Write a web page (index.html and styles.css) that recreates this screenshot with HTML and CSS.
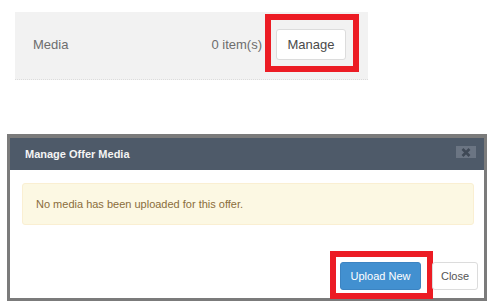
FILE: index.html
```html
<!DOCTYPE html>
<html>
<head>
<meta charset="utf-8">
<link rel="stylesheet" href="styles.css">
</head>
<body>
  <div class="panel">
    <span class="panel-label">Media</span>
    <div class="panel-right">
      <span class="count">0 item(s)</span>
      <div class="mark mark-manage">
        <button class="btn btn-default btn-manage">Manage</button>
      </div>
    </div>
  </div>

  <div class="modal">
    <div class="modal-header">
      <span class="modal-title">Manage Offer Media</span>
      <span class="modal-close">
        <svg width="10" height="9" viewBox="0 0 10 9"><path d="M1.5 1 L8.5 8 M8.5 1 L1.5 8" stroke="#3f4956" stroke-width="2.6" fill="none"/></svg>
      </span>
    </div>
    <div class="modal-body">
      <div class="alert">No media has been uploaded for this offer.</div>
    </div>
    <div class="modal-footer">
      <div class="mark mark-upload">
        <button class="btn btn-primary">Upload New</button>
      </div>
      <button class="btn btn-default btn-close">Close</button>
    </div>
  </div>
</body>
</html>
```

FILE: styles.css
```css
* { box-sizing: border-box; }
html, body { margin: 0; padding: 0; background: #fff; }
body {
  font-family: "Liberation Sans", Arial, sans-serif;
  width: 492px;
  height: 304px;
  overflow: hidden;
  padding-top: 12px;
}
.panel {
  margin-left: 15px;
  width: 353px;
  height: 68px;
  background: #f2f2f2;
  border-bottom: 1px dotted #dcdcdc;
  display: flex;
  align-items: center;
  justify-content: space-between;
  padding: 0 9px 3px 18px;
}
.panel-label { font-size: 13px; color: #6d6d6d; }
.panel-right { display: flex; align-items: center; }
.count { font-size: 13px; color: #6d6d6d; margin-right: 3px; }
.mark {
  border: 6px solid #ec1c24;
}
.mark-manage {
  padding: 9px 7px 6px 5px;
  margin-bottom: 2px;
}
.btn {
  font-family: "Liberation Sans", Arial, sans-serif;
  border-radius: 3px;
  cursor: pointer;
  display: block;
}
.btn-default {
  background: #fff;
  border: 1px solid #dcdcdc;
  color: #4a4a4a;
}
.btn-manage {
  width: 70px;
  height: 31px;
  font-size: 13px;
  padding: 0;
}
.modal {
  margin-top: 54px;
  margin-left: 7px;
  width: 480px;
  height: 167px;
  border: 3px solid #7b7b7b;
  border-top-width: 4px;
  background: #fff;
  display: flex;
  flex-direction: column;
}
.modal-header {
  height: 32px;
  background: #4e5a69;
  display: flex;
  align-items: center;
  justify-content: space-between;
  padding: 0 8px 0 15px;
}
.modal-title {
  color: #f4f4f4;
  font-size: 11px;
  font-weight: bold;
}
.modal-close {
  width: 20px;
  height: 12px;
  background: #6b7583;
  display: flex;
  align-items: center;
  justify-content: center;
  margin-top: -4px;
}
.modal-body {
  padding: 13px 10px 0 12px;
}
.alert {
  height: 42px;
  background: #fcf8e3;
  border: 1px solid #faefd2;
  border-radius: 3px;
  color: #8a6d3b;
  font-size: 11px;
  display: flex;
  align-items: center;
  padding-left: 13px;
}
.modal-footer {
  flex: 1;
  display: flex;
  justify-content: flex-end;
  align-items: flex-end;
  padding-right: 6px;
}
.mark-upload {
  padding: 5px 6px 3px 4px;
  margin-right: -1px;
  margin-bottom: -1px;
}
.btn-primary {
  width: 81px;
  height: 28px;
  background: #4290d0;
  border: 1px solid #3c84c2;
  color: #fff;
  font-size: 11px;
  padding: 0;
}
.btn-close {
  width: 46px;
  height: 28px;
  font-size: 11px;
  padding: 0;
  color: #555;
  margin-bottom: 8px;
}
```
